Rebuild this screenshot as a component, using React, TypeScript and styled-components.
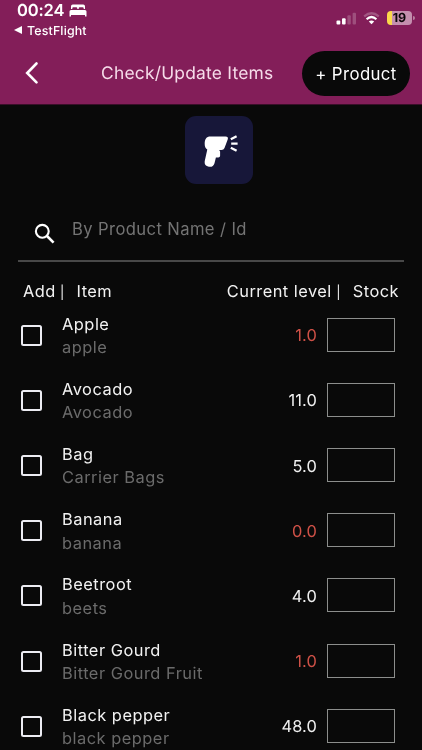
import React from "react";
import styled, { createGlobalStyle } from "styled-components";

const GlobalStyle = createGlobalStyle`
  * { box-sizing: border-box; }
  html, body { margin: 0; background: #090909; }
  body {
    overflow: hidden;
    font-family: Inter, "Liberation Sans", sans-serif;
    text-rendering: geometricPrecision;
  }
`;

const Screen = styled.main`
  width: 422px;
  height: 750px;
  overflow: hidden;
  color: #f2f2f2;
  will-change: transform;
`;

const Header = styled.header`
  height: 105px;
  background: #831e59;
  border-bottom: 1px solid #3a0f29;
`;

const StatusBar = styled.div`
  display: flex;
  justify-content: space-between;
  height: 42px;
  padding: 0 17px 0 17px;
  color: #fff;
`;

const ClockLine = styled.div`
  display: flex;
  align-items: center;
  gap: 5px;
  height: 20px;
  font-size: 16.5px;
  line-height: 20px;
  font-weight: 600;
  letter-spacing: -0.15px;
`;

const BackToApp = styled.div`
  display: flex;
  align-items: center;
  gap: 5px;
  height: 20px;
  margin-left: -3px;
  font-size: 12.4px;
  font-weight: 500;
  letter-spacing: 0.15px;
`;

const StatusIcons = styled.div`
  display: flex;
  align-items: center;
  gap: 6px;
  height: 36px;
  margin-right: -6px;
`;

const Battery = styled.div`
  position: relative;
  width: 25px;
  height: 14px;
  margin-left: 1px;
  margin-right: -1px;
  border-radius: 4px;
  background: linear-gradient(90deg, #fbd84b 5px, #c48fae 5px);
  color: #0a0608;
  font-size: 12.5px;
  line-height: 15px;
  font-weight: 700;
  text-align: center;
  &::after {
    content: "";
    position: absolute;
    left: 26px;
    top: 5px;
    width: 1.5px;
    height: 4px;
    border-radius: 0 2px 2px 0;
    background: #b781a0;
  }
`;

const NavBar = styled.div`
  display: grid;
  grid-template-columns: 77px 1fr 108px;
  align-items: center;
  height: 62px;
  padding: 0 12px 0 24px;
`;

const PlainButton = styled.button`
  display: flex;
  padding: 0;
  border: 0;
  background: none;
  color: #fff;
`;

const Title = styled.h1`
  margin: 0;
  padding-top: 2px;
  color: #f6dcea;
  font-size: 17.4px;
  line-height: 22px;
  font-weight: 400;
  letter-spacing: 0.22px;
  white-space: nowrap;
`;

const ProductButton = styled.button`
  width: 108px;
  height: 45px;
  padding: 1px 0 0;
  border: 0;
  border-radius: 23px;
  background: #090909;
  color: #fff;
  font: 400 16.8px/22px Inter, sans-serif;
  letter-spacing: 0.4px;
  white-space: nowrap;
`;

const ScanArea = styled.section`
  display: flex;
  justify-content: center;
  height: 97px;
  padding: 11px 0 0 16px;
`;

const ScanButton = styled.button`
  width: 68px;
  height: 68px;
  padding: 0;
  border: 0;
  border-radius: 11px;
  background: #171739;
`;

const SearchBar = styled.label`
  display: flex;
  height: 60px;
  margin: 0 18px;
  padding: 19px 0 0 14px;
  gap: 16px;
  border-bottom: 2px solid #484848;
`;

const SearchInput = styled.input`
  flex: 1;
  height: 20px;
  padding: 0;
  border: 0;
  outline: 0;
  margin-top: -2px;
  background: none;
  color: #fff;
  font: 400 16.6px/20px Inter, sans-serif;
  letter-spacing: 0.4px;
  &::placeholder { color: #747474; opacity: 1; }
`;

const ListHeader = styled.div`
  display: flex;
  justify-content: space-between;
  height: 40px;
  padding: 18px 23px 0;
  font-size: 16.4px;
  line-height: 22px;
  letter-spacing: 0.4px;
`;

const HeaderGroup = styled.div<{ $spacing?: number }>`
  display: flex;
  letter-spacing: ${({ $spacing = 0.4 }) => $spacing}px;
`;

const Divider = styled.span`
  width: 21px;
  padding: 2px 0 0 4.5px;
  font-size: 13px;
`;

const List = styled.ul`
  margin: 0;
  padding: 0;
  list-style: none;
`;

const Row = styled.li`
  display: grid;
  grid-template-columns: 41px 1fr auto 68px;
  align-items: center;
  height: 65.2px;
  padding: 0 27px 0 21px;
`;

const Checkbox = styled.input`
  appearance: none;
  width: 21px;
  height: 21px;
  margin: 1px 0 0;
  border: 2px solid #ececf2;
  border-radius: 2.5px;
`;

const Names = styled.div`
  padding-top: 3px;
  font-size: 16.4px;
  line-height: 23.5px;
  letter-spacing: 0.5px;
`;

const Name = styled.div`
  color: #f2f2f2;
`;

const Alias = styled.div`
  color: #6b6b6b;
`;

const Level = styled.span<{ $low: boolean }>`
  margin-right: 10px;
  padding-top: 1.2px;
  color: ${({ $low }) => ($low ? "#cf5147" : "#f0f0f0")};
  font-size: 16.4px;
  letter-spacing: 0.15px;
`;

const StockInput = styled.input`
  width: 68px;
  height: 34px;
  padding: 0 6px;
  border: 1px solid #8c8e8c;
  border-radius: 0;
  background: none;
  color: #fff;
`;

const items = [
  { name: "Apple", alias: "apple", level: "1.0", low: true },
  { name: "Avocado", alias: "Avocado", level: "11.0", low: false },
  { name: "Bag", alias: "Carrier Bags", level: "5.0", low: false },
  { name: "Banana", alias: "banana", level: "0.0", low: true },
  { name: "Beetroot", alias: "beets", level: "4.0", low: false },
  { name: "Bitter Gourd", alias: "Bitter Gourd Fruit", level: "1.0", low: true },
  { name: "Black pepper", alias: "black pepper", level: "48.0", low: false },
];

const BedIcon = () => (
  <svg width="18" height="13" viewBox="0 0 18 13" fill="#fff">
    <path d="M2 5V2.3Q2 .5 3.8.5h10.4Q16 .5 16 2.3V5h-1.3V4.2q0-1-1-1h-3q-1 0-1 1V5H8.3v-.8q0-1-1-1h-3q-1 0-1 1V5z" />
    <path d="M2 6h14q1.5 0 1.5 1.5v5H16V11H2v1.5H.5v-5Q.5 6 2 6z" />
  </svg>
);

const SignalIcon = () => (
  <svg width="20" height="13" viewBox="0 0 20 13" fill="#fff" overflow="visible">
    <rect x="-.5" y="8.5" width="3.8" height="4" rx="1" />
    <rect x="5" y="6.3" width="3.6" height="6.2" rx="1" />
    <rect x="10.4" y="3.3" width="3.4" height="9.2" rx="1" opacity=".22" />
    <rect x="15.6" y=".7" width="3.4" height="11.8" rx="1" opacity=".22" />
  </svg>
);

const WifiIcon = () => (
  <svg width="17" height="13" viewBox="0 0 17 13" fill="none">
    <path d="M1.2 4.4Q8.5-1.9 15.8 4.4" stroke="#fff" strokeWidth="2.2" opacity=".25" />
    <path d="M3.6 7.2Q8.5 2.8 13.4 7.2" stroke="#fff" strokeWidth="2.2" />
    <path d="M5.8 9.5q2.7-2.2 5.4 0L8.5 12.3z" fill="#fff" />
  </svg>
);

const ChevronIcon = () => (
  <svg width="16" height="24" viewBox="0 0 16 24" fill="none">
    <path d="M12.5 2.5 3.2 12l9.3 9.3" stroke="#fff" strokeWidth="2.6" strokeLinecap="round" />
  </svg>
);

const ScannerIcon = () => (
  <svg width="68" height="68" viewBox="0 0 68 68">
    <path
      d="M25.5 20.4h15q3.2 0 2.2 3l-3.2 8.6q-.8 2.1-3 2.1h-2.3l.9 1.4v4.2q0 1.8-1.8 1.8h-2.4l-1.4 5.7c-.8 2.9-3 4-5.6 3.5-3.2-.5-4.7-2.6-4.2-5.5l2.6-11.7c-1.9-1.1-2.6-3.3-2.6-5.5 0-5 1.6-7.6 5.8-7.6z"
      fill="#fff"
    />
    <path d="m45.8 23.3 5.8-3M46.2 27.6h6.4M45.8 31.7l5.8 3" stroke="#fff" strokeWidth="2.3" />
  </svg>
);

const SearchIcon = () => (
  <svg width="24" height="24" viewBox="0 0 24 24" fill="none" stroke="#fff">
    <circle cx="10.3" cy="10.3" r="6.4" strokeWidth="2.1" />
    <path d="m15 15 6.6 6.6" strokeWidth="2.6" />
  </svg>
);

export default function App() {
  return (
    <>
      <GlobalStyle />
      <Screen>
        <Header>
          <StatusBar>
            <div>
              <ClockLine>
                00:24
                <BedIcon />
              </ClockLine>
              <BackToApp>
                <svg width="8" height="8" viewBox="0 0 8 8" fill="#fff">
                  <path d="M0 4 8 0v8z" />
                </svg>
                TestFlight
              </BackToApp>
            </div>
            <StatusIcons>
              <SignalIcon />
              <WifiIcon />
              <Battery>19</Battery>
            </StatusIcons>
          </StatusBar>
          <NavBar>
            <PlainButton aria-label="Back">
              <ChevronIcon />
            </PlainButton>
            <Title>Check/Update Items</Title>
            <ProductButton>+ Product</ProductButton>
          </NavBar>
        </Header>
        <ScanArea>
          <ScanButton aria-label="Scan barcode">
            <ScannerIcon />
          </ScanButton>
        </ScanArea>
        <SearchBar>
          <SearchIcon />
          <SearchInput placeholder="By Product Name / Id" />
        </SearchBar>
        <ListHeader>
          <HeaderGroup>
            <span>Add</span>
            <Divider>|</Divider>
            <span>Item</span>
          </HeaderGroup>
          <HeaderGroup $spacing={0.47}>
            <span>Current level</span>
            <Divider>|</Divider>
            <span>Stock</span>
          </HeaderGroup>
        </ListHeader>
        <List>
          {items.map((item) => (
            <Row key={item.name}>
              <Checkbox type="checkbox" aria-label={item.name} />
              <Names>
                <Name>{item.name}</Name>
                <Alias>{item.alias}</Alias>
              </Names>
              <Level $low={item.low}>{item.level}</Level>
              <StockInput aria-label={`${item.name} stock`} />
            </Row>
          ))}
        </List>
      </Screen>
    </>
  );
}
